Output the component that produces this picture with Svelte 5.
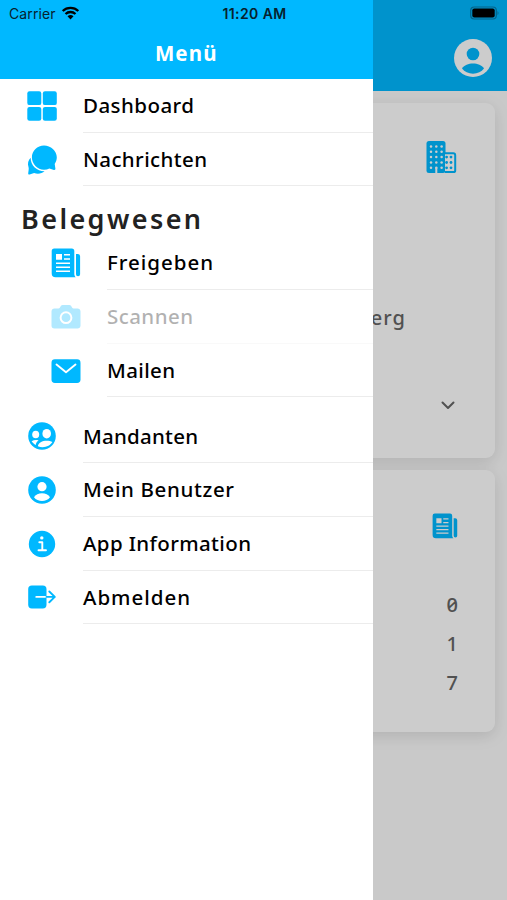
<script>
  const topItems = [
    { label: 'Dashboard', icon: 'grid', width: 111 },
    { label: 'Nachrichten', icon: 'chat', width: 124 },
  ];

  const documentItems = [
    { label: 'Freigeben', icon: 'news', width: 106 },
    { label: 'Scannen', icon: 'camera', width: 86, disabled: true },
    { label: 'Mailen', icon: 'mail', width: 68 },
  ];

  const bottomItems = [
    { label: 'Mandanten', icon: 'group', width: 115 },
    { label: 'Mein Benutzer', icon: 'person', width: 151 },
    { label: 'App Information', icon: 'info', width: 168 },
    { label: 'Abmelden', icon: 'logout', width: 107 },
  ];

  const counts = [0, 1, 7];
</script>

{#snippet icon(name)}
  <svg class="icon" viewBox="0 0 30 30" fill="currentColor">
    {#if name === 'grid'}
      <rect x="0.3" y="0.3" width="14" height="13.8" rx="2.2" />
      <rect x="15.8" y="0.3" width="14" height="13.8" rx="2.2" />
      <rect x="0.3" y="15.9" width="14" height="13.8" rx="2.2" />
      <rect x="15.8" y="15.9" width="14" height="13.8" rx="2.2" />
    {:else if name === 'chat'}
      <path
        d="M3.7 12.7C1.2 15 .3 18.7 1.5 22c.5 1.4.1 3.4-.3 6.3-.1 1 .5 1.5 1.4 1.2l4.5-1.5c3.7 1.3 7.8.6 10.5-1.7C10.5 26.5 3.3 20.5 3.7 12.7z"
      />
      <path
        d="M17 .4C10.3.4 4.9 5.7 4.9 12.3S10.3 24.7 17 24.7c2 0 3.7-.4 5.4-1.2l4.5 1.4c1 .3 1.7-.3 1.5-1.3l-.7-4.7c1.4-2 2.1-4.2 2.1-6.6C29.8 5.7 23.7.4 17 .4z"
      />
    {:else if name === 'news'}
      <path
        fill-rule="evenodd"
        d="M3.2.6h17.6a2.5 2.5 0 0 1 2.5 2.5v22.8c0 1.4.6 2.5 1.5 3.3H4.5A3.8 3.8 0 0 1 .7 25.400V3.100A2.5 2.5 0 0 1 3.2.6zM5 6v5.800h6V6zm8 0v1.500h6V6zm0 4.300v1.500h6v-1.500zM5 14.500V16h14v-1.500zm0 4V20h14v-1.500zm0 4V24h14v-1.500z"
      />
      <path d="M25 6h1.800a2.300 2.300 0 0 1 2.300 2.300v17.900a2 2 0 0 1-4.100 0z" />
    {:else if name === 'camera'}
      <path
        fill-rule="evenodd"
        d="M3.500 6.500h4c.6 0 1-.3 1.300-.8l1.200-1.900C10.500 3.200 11 3 11.700 3h6.600c.7 0 1.200.2 1.700.8l1.200 1.900c.3.5.7.8 1.300.8h4c1.700 0 3 1.300 3 3v14c0 1.700-1.300 3-3 3h-23a3 3 0 0 1-3-3v-14c0-1.700 1.300-3 3-3zM15 9.300a6.400 6.400 0 1 0 0 12.800 6.400 6.400 0 0 0 0-12.800zm0 2a4.400 4.400 0 1 1 0 8.800 4.400 4.400 0 0 1 0-8.800z"
      />
    {:else if name === 'mail'}
      <rect x="0.5" y="3.3" width="29" height="23.6" rx="3.4" />
      <path class="cut-line" d="m5.500 8.500 9.500 7.700 9.500-7.700" />
    {:else if name === 'group'}
      <circle cx="15" cy="15" r="13.8" />
      <ellipse class="cut" cx="8.7" cy="13.5" rx="3.5" ry="3.8" />
      <ellipse class="cut" cx="19.7" cy="12.7" rx="4.3" ry="4.8" />
      <path
        class="cut"
        d="M4.600 20.300c2-1.300 4.600-1.500 7-.9-1.600 1-2.600 2.300-2.800 4.600-1.800-.9-3.200-2.200-4.200-3.700z"
      />
      <path
        class="cut"
        d="M10.900 25.300c.3-3.600 4.400-5.600 8.800-5.600 2.200 0 4.100.5 5.700 1.400-2.300 4-8.700 6.600-14.500 4.200z"
      />
    {:else if name === 'person'}
      <circle cx="15" cy="15" r="13.8" />
      <circle class="cut" cx="15" cy="11.7" r="4.6" />
      <path
        class="cut"
        d="M7 22.200c1.500-2.800 4.700-4 8-4s6.500 1.200 8 4c-1.800 2.500-4.900 3.800-8 3.800s-6.200-1.300-8-3.800z"
      />
    {:else if name === 'info'}
      <circle cx="15" cy="15" r="13.2" />
      <circle class="cut" cx="14.8" cy="8.9" r="1.7" />
      <path class="cut-line" d="M12.300 13.200h3v7.600M11.500 21.200h7.500" />
    {:else if name === 'logout'}
      <rect x="1.2" y="3.4" width="18.3" height="23" rx="3.7" />
      <path class="cut-line" d="M9.300 14.900h10.200" />
      <path class="line" d="M19.500 14.900h8.300M22.300 9.500l5.500 5.400-5.500 5.400" />
    {/if}
  </svg>
{/snippet}

{#snippet menuItem(item)}
  <li class:disabled={item.disabled}>
    {@render icon(item.icon)}
    <div class="label">
      <svg class="label-text" height="30" width={item.width + 4}>
        <text x="0" y="23" textLength={item.width}>{item.label}</text>
      </svg>
    </div>
  </li>
{/snippet}

<div class="app">
  <div class="page">
    <header class="page-header">
      <svg class="avatar" viewBox="0 0 38 38">
        <circle cx="19" cy="19" r="19" fill="#fff" />
        <circle cx="19" cy="15" r="6.3" fill="#00b8ff" />
        <path
          d="M8 29.500c2.200-3.500 6.500-5 11-5s8.800 1.500 11 5c-2.400 3.300-6.600 5.200-11 5.200S10.400 32.800 8 29.500z"
          fill="#00b8ff"
        />
      </svg>
    </header>

    <main>
      <section class="card company">
        <svg class="building" viewBox="0 0 31 33" fill="currentColor">
          <rect x="0.5" y="0.5" width="19" height="32" rx="2.5" />
          <path
            d="M19 12.700h8.200a2 2 0 0 1 2 2v15.200a1.700 1.700 0 0 1-1.700 1.700H19"
            fill="#fff"
            stroke="currentColor"
            stroke-width="2"
          />
          {#each [6, 11.3, 16.6, 22, 27.3] as y}
            {#each [5, 10.3, 15.6] as x}
              <circle cx={x} cy={y} r="1.25" fill="#fff" />
            {/each}
          {/each}
          {#each [16.6, 22, 27.3] as y}
            <circle cx="20.6" cy={y} r="1.4" />
            <circle cx="25" cy={y} r="1.4" />
          {/each}
          <rect x="9.3" y="27" width="2" height="6" fill="#fff" />
        </svg>
        <p>Nürnberg</p>
        <svg class="chevron" viewBox="0 0 14 9">
          <path d="m1.500 1.500 5.500 5.500 5.500-5.500" />
        </svg>
      </section>

      <section class="card receipts">
        <div class="receipts-icon">{@render icon('news')}</div>
        {#each counts as count}
          <span class="count">{count}</span>
        {/each}
      </section>
    </main>
  </div>

  <div class="backdrop"></div>

  <aside class="drawer">
    <header>Menü</header>
    <ul>
      {#each topItems as item}
        {@render menuItem(item)}
      {/each}
    </ul>
    <h2>Belegwesen</h2>
    <ul class="nested">
      {#each documentItems as item}
        {@render menuItem(item)}
      {/each}
    </ul>
    <ul>
      {#each bottomItems as item}
        {@render menuItem(item)}
      {/each}
    </ul>
  </aside>

  <div class="status-bar">
    <div class="carrier">
      Carrier
      <svg width="19" height="14" viewBox="0 0 18 14">
        <path d="M1.200 5a11.200 11.200 0 0 1 15.600 0M4 8a7.300 7.300 0 0 1 10 0" />
        <path class="dot" d="M6 10.300a4.400 4.400 0 0 1 6 0L9 13.500z" />
      </svg>
    </div>
    <strong>11:20 AM</strong>
    <svg class="battery" width="30" height="14" viewBox="0 0 30 14">
      <rect class="shell" x="0.7" y="1" width="25.6" height="12" rx="3.5" />
      <rect x="2.3" y="2.6" width="22.4" height="8.8" rx="2" />
      <path class="tip" d="M27.500 5v4a2.500 2.500 0 0 0 0-4z" />
    </svg>
  </div>
</div>

<style>
  :global(body) {
    margin: 0;
  }

  .app {
    position: relative;
    height: 900px;
    overflow: hidden;
    font-family: 'Noto Sans', 'Open Sans', sans-serif;
    font-weight: 500;
    color: #000;
  }

  .page {
    height: 100%;
    background: #fcfcfc;
  }

  .page-header {
    box-sizing: border-box;
    height: 91px;
    padding: 39px 15px 0 0;
    background: #00b8ff;
    display: flex;
    justify-content: flex-end;
  }

  .avatar {
    width: 38px;
    height: 38px;
  }

  main {
    padding: 12px;
    display: flex;
    flex-direction: column;
    gap: 12px;
  }

  .card {
    box-sizing: border-box;
    display: flex;
    flex-direction: column;
    align-items: flex-end;
    background: #fff;
    border-radius: 9px;
    box-shadow: 0 4px 16px rgba(0, 0, 0, 0.12);
    color: #666;
  }

  .company {
    height: 355px;
    padding: 37px 38px 0 0;
  }

  .building {
    width: 31px;
    height: 34px;
    color: #00b8ff;
  }

  .company p {
    margin: 130px 51px 0 0;
    font-size: 20px;
    line-height: 28px;
    letter-spacing: 1px;
  }

  .chevron {
    width: 14px;
    height: 9px;
    margin: 69px 2px 0 0;
    fill: none;
    stroke: #666;
    stroke-width: 2;
    stroke-linecap: round;
    stroke-linejoin: round;
  }

  .receipts {
    height: 262px;
    padding: 43px 37px 0 0;
  }

  .receipts-icon {
    height: 71.5px;
    color: #00b8ff;
  }

  .receipts-icon .icon {
    width: 26px;
    height: 26px;
  }

  .count {
    font-size: 20px;
    line-height: 39.3px;
    font-feature-settings: 'zero';
  }

  .backdrop {
    position: absolute;
    inset: 0;
    background: rgba(0, 0, 0, 0.2);
  }

  .drawer {
    position: absolute;
    top: 0;
    left: 0;
    width: 372.5px;
    height: 100%;
    background: #fff;
  }

  .drawer header {
    box-sizing: border-box;
    height: 79px;
    padding-top: 38px;
    background: #00b8ff;
    color: #fff;
    font-size: 20.5px;
    font-weight: 700;
    line-height: 30px;
    letter-spacing: 1.1px;
    text-align: center;
  }

  ul {
    list-style: none;
    margin: 0;
    padding: 0;
  }

  h2 {
    margin: 0;
    padding-left: 21px;
    height: 50px;
    color: #222;
    font-size: 27px;
    font-weight: 600;
    line-height: 65px;
    letter-spacing: 2.4px;
  }

  li {
    display: flex;
    align-items: center;
    height: 53.7px;
    padding-left: 27px;
  }

  .nested {
    padding-bottom: 12px;
  }

  .nested li {
    padding-left: 51px;
  }

  .nested .label-text {
    margin-top: -1px;
  }

  .icon {
    width: 30px;
    height: 30px;
    flex: none;
  }

  li .icon {
    color: #00b8ff;
  }

  .cut {
    fill: #fff;
  }

  .cut-line,
  .line {
    fill: none;
    stroke: #fff;
    stroke-width: 1.9;
    stroke-linecap: round;
    stroke-linejoin: round;
  }

  .line {
    stroke: currentColor;
  }

  .label {
    box-sizing: border-box;
    display: flex;
    align-items: center;
    flex: 1;
    height: 100%;
    margin-left: 26px;
    border-bottom: 1.5px solid #ececec;
  }

  .label-text {
    overflow: visible;
    font-size: 20.5px;
  }

  .disabled {
    opacity: 0.3;
  }

  .status-bar {
    position: absolute;
    top: 0;
    left: 0;
    right: 0;
    height: 27px;
    padding: 0 7px 0 9px;
    display: grid;
    grid-template-columns: 1fr auto 1fr;
    align-items: center;
    font-family: Inter, sans-serif;
    font-size: 14px;
    font-weight: 400;
    color: #07222e;
  }

  .status-bar strong {
    font-weight: 600;
    font-size: 14px;
    letter-spacing: 0.4px;
  }

  .carrier {
    display: flex;
    align-items: center;
    gap: 5.5px;
    letter-spacing: 0.1px;
  }

  .carrier svg {
    margin-top: -2px;
  }

  .carrier path {
    fill: none;
    stroke: #000;
    stroke-width: 2.3;
  }

  .carrier .dot {
    fill: #000;
    stroke: none;
  }

  .battery {
    justify-self: end;
    margin-top: -1px;
  }

  .shell {
    fill: none;
    stroke: #04648a;
    stroke-width: 1.2;
  }

  .tip {
    fill: #04648a;
  }
</style>
